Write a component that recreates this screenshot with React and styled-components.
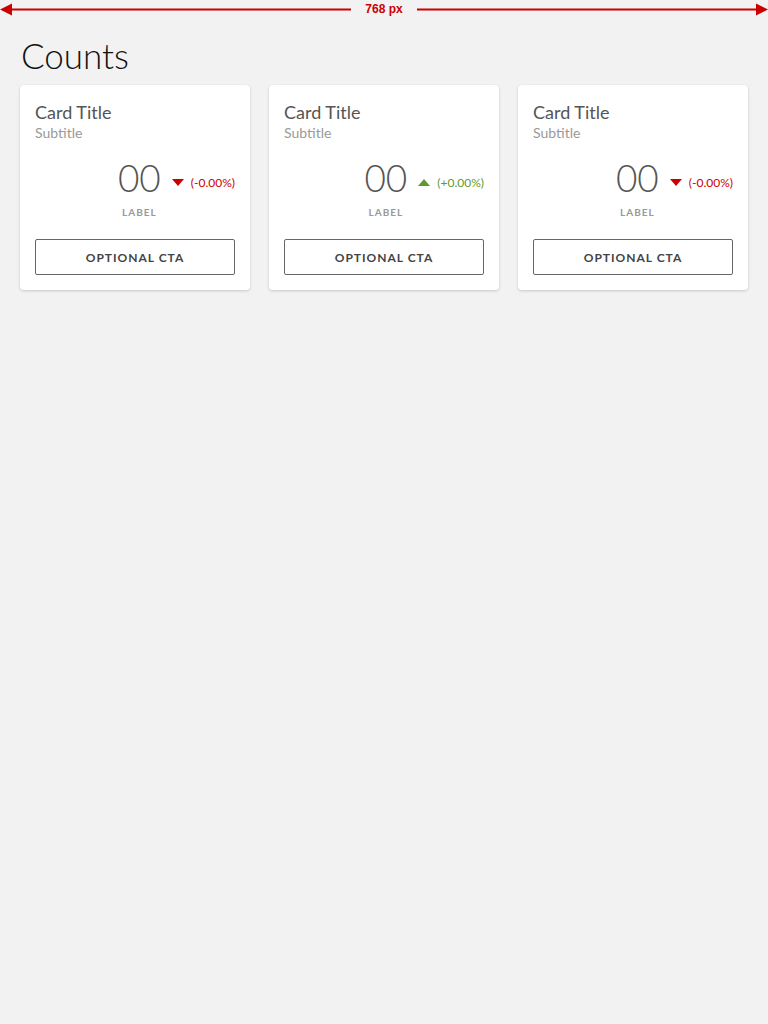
import React from 'react'
import styled, { createGlobalStyle } from 'styled-components'

const GlobalStyle = createGlobalStyle`
  html, body {
    margin: 0;
    padding: 0;
    background: #f2f2f2;
    font-family: Lato, "Open Sans", sans-serif;
  }
`

const cards = [
  { title: 'Card Title', subtitle: 'Subtitle', value: '00', change: '(-0.00%)', up: false },
  { title: 'Card Title', subtitle: 'Subtitle', value: '00', change: '(+0.00%)', up: true },
  { title: 'Card Title', subtitle: 'Subtitle', value: '00', change: '(-0.00%)', up: false }
]

function Ruler() {
  return (
    <RulerBar>
      <svg width="768" height="20" viewBox="0 0 768 20">
        <polygon points="0,9.5 12,3.5 12,15.5" fill="#cc0000" />
        <rect x="10" y="8.5" width="341" height="2" fill="#cc0000" />
        <rect x="417" y="8.5" width="341" height="2" fill="#cc0000" />
        <polygon points="768,9.5 756,3.5 756,15.5" fill="#cc0000" />
      </svg>
      <RulerText>768 px</RulerText>
    </RulerBar>
  )
}

function Triangle({ up }) {
  return (
    <svg width="12" height="7" viewBox="0 0 12 7">
      {up
        ? <polygon points="0,7 6,0 12,7" fill="#5f9a30" />
        : <polygon points="0,0 12,0 6,7" fill="#cc0000" />}
    </svg>
  )
}

function CountCard({ card }) {
  return (
    <Card>
      <CardTitle>{card.title}</CardTitle>
      <CardSubtitle>{card.subtitle}</CardSubtitle>
      <StatRow>
        <StatBlock>
          <StatValue>{card.value}</StatValue>
          <StatLabel>LABEL</StatLabel>
        </StatBlock>
        <Change up={card.up}>
          <Triangle up={card.up} />
          <span>{card.change}</span>
        </Change>
      </StatRow>
      <CtaButton>OPTIONAL CTA</CtaButton>
    </Card>
  )
}

export default function App() {
  return (
    <Page>
      <GlobalStyle />
      <Ruler />
      <Content>
        <PageTitle>Counts</PageTitle>
        <CardGrid>
          {cards.map((c, i) => <CountCard key={i} card={c} />)}
        </CardGrid>
      </Content>
    </Page>
  )
}

const Page = styled.div`
  min-height: 1024px;
  background: #f2f2f2;
`

const RulerBar = styled.div`
  position: relative;
  height: 20px;
  svg { display: block; }
`

const RulerText = styled.span`
  position: absolute;
  left: 351px;
  width: 66px;
  top: 2px;
  text-align: center;
  font-family: "Liberation Sans", sans-serif;
  font-weight: bold;
  font-size: 12px;
  color: #cc0000;
`

const Content = styled.div`
  padding: 0 20px;
`

const PageTitle = styled.h1`
  margin: 12px 0 0 1px;
  font-family: Lato, sans-serif;
  font-weight: 300;
  font-size: 35px;
  line-height: 46px;
  color: #111;
`

const CardGrid = styled.div`
  display: grid;
  grid-template-columns: repeat(3, 230px);
  justify-content: space-between;
  margin-top: 7px;
`

const Card = styled.div`
  background: #fff;
  border-radius: 4px;
  box-shadow: 0 1px 3px rgba(0, 0, 0, 0.18);
  padding: 15px;
  display: flex;
  flex-direction: column;
`

const CardTitle = styled.div`
  font-size: 18px;
  line-height: 24px;
  color: #555;
`

const CardSubtitle = styled.div`
  font-size: 14px;
  line-height: 18px;
  color: #999;
`

const StatRow = styled.div`
  display: flex;
  justify-content: flex-end;
  align-items: flex-start;
  margin-top: 13px;
`

const StatBlock = styled.div`
  display: flex;
  flex-direction: column;
  align-items: center;
`

const StatValue = styled.div`
  font-size: 37px;
  font-weight: 300;
  line-height: 46px;
  color: #555;
`

const StatLabel = styled.div`
  font-size: 10px;
  font-weight: bold;
  letter-spacing: 1px;
  line-height: 12px;
  color: #999;
  margin-top: 5px;
`

const Change = styled.div`
  display: flex;
  align-items: center;
  gap: 7px;
  margin-left: 11px;
  margin-top: 20px;
  font-size: 12px;
  color: ${p => (p.up ? '#5f9a30' : '#cc0000')};
`

const CtaButton = styled.button`
  margin-top: 21px;
  height: 36px;
  width: 100%;
  background: #fff;
  border: 1px solid #666;
  border-radius: 2px;
  font-family: Lato, sans-serif;
  font-size: 12px;
  font-weight: bold;
  letter-spacing: 1px;
  color: #444;
  cursor: pointer;
`
